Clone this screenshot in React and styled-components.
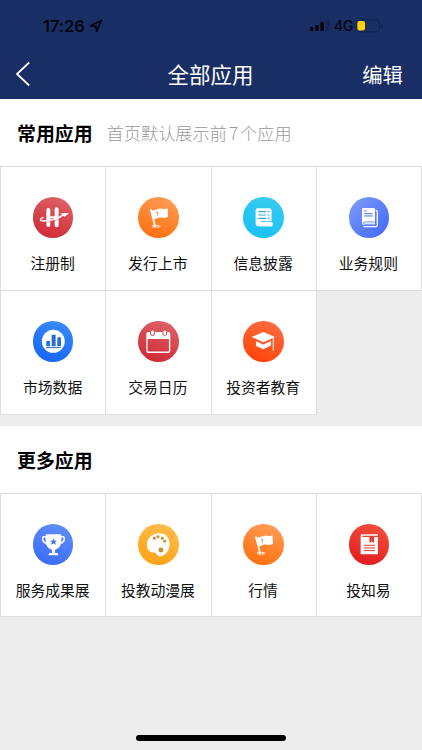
import React from 'react';
import styled, { createGlobalStyle } from 'styled-components';

const GlobalStyle = createGlobalStyle`
  body {
    margin: 0;
    background-color: #ededed;
    font-family: 'Noto Sans CJK SC', sans-serif;
  }
`

const Page = styled.div`
  box-sizing: border-box;
  display: flex;
  flex-direction: column;
  width: 422px;
  height: 750px;
  background-color: #ededed;
  overflow: hidden;
`

const Header = styled.header`
  height: 99px;
  background-color: #182e65;
`

const StatusBar = styled.div`
  box-sizing: border-box;
  display: flex;
  justify-content: space-between;
  align-items: center;
  height: 50px;
  padding: 2px 39px 0 43px;
  color: #03060f;
  font-family: Inter, sans-serif;
`

const StatusGroup = styled.div`
  display: flex;
  align-items: center;
`

const Clock = styled.span`
  font-size: 16.6px;
  font-weight: 600;
  line-height: 20px;
  letter-spacing: -0.1px;
  margin-right: 4px;
`

const Network = styled.span`
  width: 19px;
  margin: 0 3px 0 4px;
  font-size: 13.8px;
  font-weight: 500;
  line-height: 20px;
`

const NavBar = styled.nav`
  display: grid;
  grid-template-columns: 100px 1fr 100px;
  align-items: center;
  height: 48px;
  color: #fff;
`

const Back = styled.button`
  display: flex;
  margin: 0;
  padding: 0 0 0 15px;
  border: none;
  background: none;
  color: inherit;
`

const NavTitle = styled.h1`
  margin: 0;
  padding-right: 1px;
  font-size: 21.5px;
  font-weight: 400;
  line-height: 30px;
  text-align: center;
`

const Edit = styled.span`
  padding-right: 19px;
  font-size: 20.4px;
  line-height: 30px;
  text-align: right;
`

const Section = styled.section`
  margin-bottom: 11px;
`

const SectionHead = styled.div`
  box-sizing: border-box;
  display: flex;
  align-items: center;
  height: 67px;
  padding-left: 17px;
  background-color: #fff;
`

const SectionTitle = styled.h2`
  margin: 0;
  color: #000;
  font-size: 18.9px;
  font-weight: 700;
  line-height: 28px;
`

const Hint = styled.span`
  margin-left: 14px;
  color: #9a9a9a;
  font-size: 17.2px;
  font-weight: 300;
  line-height: 28px;
`

const Count = styled.span`
  margin: 0 2px;
`

const Grid = styled.div`
  display: grid;
  grid-template-columns: repeat(4, 1fr);
  border-top: 1px solid #dedede;
  border-left: 1px solid #dedede;
`

const Cell = styled.div`
  box-sizing: border-box;
  display: flex;
  flex-direction: column;
  align-items: center;
  height: ${props => props.$height}px;
  padding-top: 30px;
  border-right: 1px solid #dedede;
  border-bottom: 1px solid #dedede;
  background-color: #fff;
`

const Badge = styled.div`
  width: 40.6px;
  height: 40.6px;
  border-radius: 50%;
  background: linear-gradient(${props => props.$angle || '200deg'}, ${props => props.$from}, ${props => props.$to});

  svg {
    display: block;
    width: 100%;
    height: 100%;
  }
`

const Label = styled.span`
  margin-top: 14px;
  padding-right: 1px;
  color: #111;
  font-size: 14.8px;
  line-height: 22px;
  white-space: nowrap;
`

const HomeIndicator = styled.div`
  width: 150px;
  height: 6px;
  margin: auto auto 9px 136px;
  border-radius: 3px;
  background-color: #000;
`

// every badge glyph is drawn on a 122 x 122 canvas
const Glyph = ({ children }) => (
  <svg viewBox="0 0 122 122" fill="none" strokeLinecap="round" strokeLinejoin="round">
    {children}
  </svg>
)

const RegisterIcon = () => (
  <Glyph>
    <path d="M46 39V84M71 37V85" stroke="#fff" strokeWidth="12" />
    <path d="M46 61H71" stroke="#fff" strokeWidth="6" />
    <path d="M30 62C19 65 20 73 33 72C55 71 76 66 92 53" stroke="#fff" strokeWidth="4.5" />
    <path d="M82 49L109 48L95 59Z" fill="#fff" />
    <path d="M40 75.500C54 75 66 71 77 67" stroke="#d8555c" strokeWidth="1.500" />
  </Glyph>
)

const FlagIcon = () => (
  <Glyph>
    <path d="M39 39L51 87" stroke="#fff" strokeWidth="5" />
    <path d="M36 37C45 43 53 38 61 36C70 32 78 39 89 34L90 59C79 67 71 59 62 62C54 64 52 68 45 67Z" fill="#fff" />
    <path d="M55 47L58 45V55" stroke="#e07a32" strokeWidth="2.5" />
    <ellipse cx="54" cy="88" rx="12" ry="3" stroke="#fff" strokeWidth="2.5" />
  </Glyph>
)

const DisclosureIcon = () => (
  <Glyph>
    <path d="M43 34H79Q86 34 86 41V73H54Q47 74 47 82V89Q38 88 38 80V39Q38 34 43 34Z" fill="#fff" />
    <path d="M47 44H68M47 54H68M47 64H68M75 44H78M75 54H78M75 64H78" stroke="#38a8d2" strokeWidth="3.5" />
    <rect x="48" y="75" width="41" height="14" rx="4" fill="#fff" />
  </Glyph>
)

const RulesIcon = () => (
  <Glyph>
    <path d="M81 40Q85 40 85 45V85Q85 89 80 89H45" stroke="#fff" strokeWidth="4" />
    <path d="M43 33H74Q78 33 78 37V84H45Q39 84 39 78V37Q39 33 43 33Z" fill="#fff" />
    <path d="M47 42H52M47 50H70M47 57H70" stroke="#4b72dc" strokeWidth="3" />
    <path d="M76 75H48Q43 75 43 78.500Q43 82 48 82H76" stroke="#5279e4" strokeWidth="2.5" />
  </Glyph>
)

const MarketIcon = () => (
  <Glyph>
    <circle cx="61" cy="61" r="34.500" fill="#fff" />
    <path d="M40 62Q40 60 42 60H51V76H40ZM56 43Q56 41 58 41H68V76H56ZM73 51Q73 49 75 49H84V76H73Z" fill="#256dd3" />
    <path d="M41 80H82" stroke="#256dd3" strokeWidth="3" />
  </Glyph>
)

const CalendarIcon = () => (
  <Glyph>
    <rect x="27" y="35" width="68" height="59" rx="4" stroke="#fff" strokeWidth="4" />
    <path d="M27 36H95V54H27Z" fill="#fff" />
    <rect x="38" y="27" width="11" height="16" rx="4" fill="#fff" stroke="#d54a50" strokeWidth="3" />
    <rect x="75" y="27" width="11" height="16" rx="4" fill="#fff" stroke="#d54a50" strokeWidth="3" />
  </Glyph>
)

const EducationIcon = () => (
  <Glyph>
    <path d="M61 33L26 48L61 64L96 48Z" fill="#fff" />
    <path d="M39 61L61 71L84 60V74L61 85L39 75Z" fill="#fff" />
    <path d="M91 50V88" stroke="#fff" strokeWidth="3" />
  </Glyph>
)

const TrophyIcon = () => (
  <Glyph>
    <path d="M39 38H33Q29 38 29 44Q29 55 42 59M84 38H90Q94 38 94 44Q94 55 81 59" stroke="#fff" strokeWidth="4.5" />
    <path d="M38 34Q38 31 42 31H81Q85 31 85 34V50Q85 70 70 76L66 78V87H73Q76 87 76 94H47Q47 87 50 87H57V78L53 76Q38 70 38 50Z" fill="#fff" />
    <path d="M61.500 43L64.500 50L72 50.500L66.300 55.200L68.500 62.500L61.500 58.500L54.500 62.500L56.700 55.200L51 50.500L58.500 50Z" fill="#4671de" />
  </Glyph>
)

const PaletteIcon = () => (
  <Glyph>
    <path d="M61 28C82 26 96 41 95 61C95 79 83 94 69 97C56 100 59 87 48 86C34 85 27 76 27 62C27 43 42 30 61 28Z" fill="#fff" />
    <g fill="#c98c32">
      <circle cx="49" cy="43" r="4.500" />
      <circle cx="60" cy="38" r="4.500" />
      <circle cx="73" cy="43" r="4.500" />
      <circle cx="80" cy="52" r="4.500" />
      <circle cx="69" cy="78" r="7.500" />
    </g>
  </Glyph>
)

const BookIcon = () => (
  <Glyph>
    <path d="M38 31H87V35H40V39H62V57L68 51L75 57V39H87V91H35V35Q35 31 38 31Z" fill="#fff" />
    <path d="M62 39H75V57L68 51L62 57Z" fill="#e33b32" />
    <path d="M45 64H77M45 72H77M45 80H77" stroke="#dc3a30" strokeWidth="3" />
  </Glyph>
)

const commonApps = [
  { name: '注册制', icon: RegisterIcon, from: '#e0666c', to: '#cd2530' },
  { name: '发行上市', icon: FlagIcon, from: '#ffa05c', to: '#ff6b08' },
  { name: '信息披露', icon: DisclosureIcon, from: '#38ccee', to: '#18bff6' },
  { name: '业务规则', icon: RulesIcon, from: '#7f9df7', to: '#3f66ff', angle: '135deg' },
  { name: '市场数据', icon: MarketIcon, from: '#3c8efa', to: '#1462fb' },
  { name: '交易日历', icon: CalendarIcon, from: '#e0666c', to: '#cd2530' },
  { name: '投资者教育', icon: EducationIcon, from: '#ff7046', to: '#ff4005' },
]

const moreApps = [
  { name: '服务成果展', icon: TrophyIcon, from: '#6490f8', to: '#3568fb' },
  { name: '投教动漫展', icon: PaletteIcon, from: '#ffbd51', to: '#ffa111' },
  { name: '行情', icon: FlagIcon, from: '#ffa05c', to: '#ff6b08' },
  { name: '投知易', icon: BookIcon, from: '#f5543f', to: '#df171b' },
]

const AppGrid = ({ apps, height }) => (
  <Grid>
    {apps.map(({ name, icon: Icon, from, to, angle }) => (
      <Cell key={name} $height={height}>
        <Badge $from={from} $to={to} $angle={angle}><Icon /></Badge>
        <Label>{name}</Label>
      </Cell>
    ))}
  </Grid>
)

const App = () => {
  return (
    <Page>
      <GlobalStyle />
      <Header>
        <StatusBar>
          <StatusGroup>
            <Clock>17:26</Clock>
            <svg width="14" height="14" viewBox="0 0 14 14">
              <path d="M1.500 6.800L12.300 1.500L7.600 12.300L7 7.300Z" fill="none" stroke="#03060f" strokeWidth="1.700" strokeLinejoin="round" />
            </svg>
          </StatusGroup>
          <StatusGroup>
            <svg width="20" height="12" viewBox="0 0 20 12">
              <g fill="#03060f">
                <rect x="0" y="7" width="3.500" height="4" rx="1" />
                <rect x="5.200" y="5" width="3.500" height="6" rx="1" />
                <rect x="10.400" y="2" width="3.500" height="9" rx="1" />
              </g>
              <rect x="15.600" y="0" width="3.500" height="11" rx="1" fill="#142552" />
            </svg>
            <Network>4G</Network>
            <svg width="27" height="14" viewBox="0 0 27 14">
              <rect x="0.500" y="0.800" width="23" height="12" rx="3.700" fill="none" stroke="#11214c" />
              <path d="M25 5Q26.500 5.500 26.500 7Q26.500 8.500 25 9Z" fill="#11214c" />
              <rect x="1.300" y="2" width="7.700" height="9.500" rx="2" fill="#ffd10b" />
            </svg>
          </StatusGroup>
        </StatusBar>
        <NavBar>
          <Back aria-label="返回">
            <svg width="16" height="26" viewBox="0 0 16 26">
              <path d="M14.200 1.500L2 13L14.200 24.500" fill="none" stroke="#fff" strokeWidth="1.800" />
            </svg>
          </Back>
          <NavTitle>全部应用</NavTitle>
          <Edit>编辑</Edit>
        </NavBar>
      </Header>
      <Section>
        <SectionHead>
          <SectionTitle>常用应用</SectionTitle>
          <Hint>首页默认展示前<Count>7</Count>个应用</Hint>
        </SectionHead>
        <AppGrid apps={commonApps} height={124} />
      </Section>
      <Section>
        <SectionHead>
          <SectionTitle>更多应用</SectionTitle>
        </SectionHead>
        <AppGrid apps={moreApps} height={123} />
      </Section>
      <HomeIndicator />
    </Page>
  )
}

export default App;
